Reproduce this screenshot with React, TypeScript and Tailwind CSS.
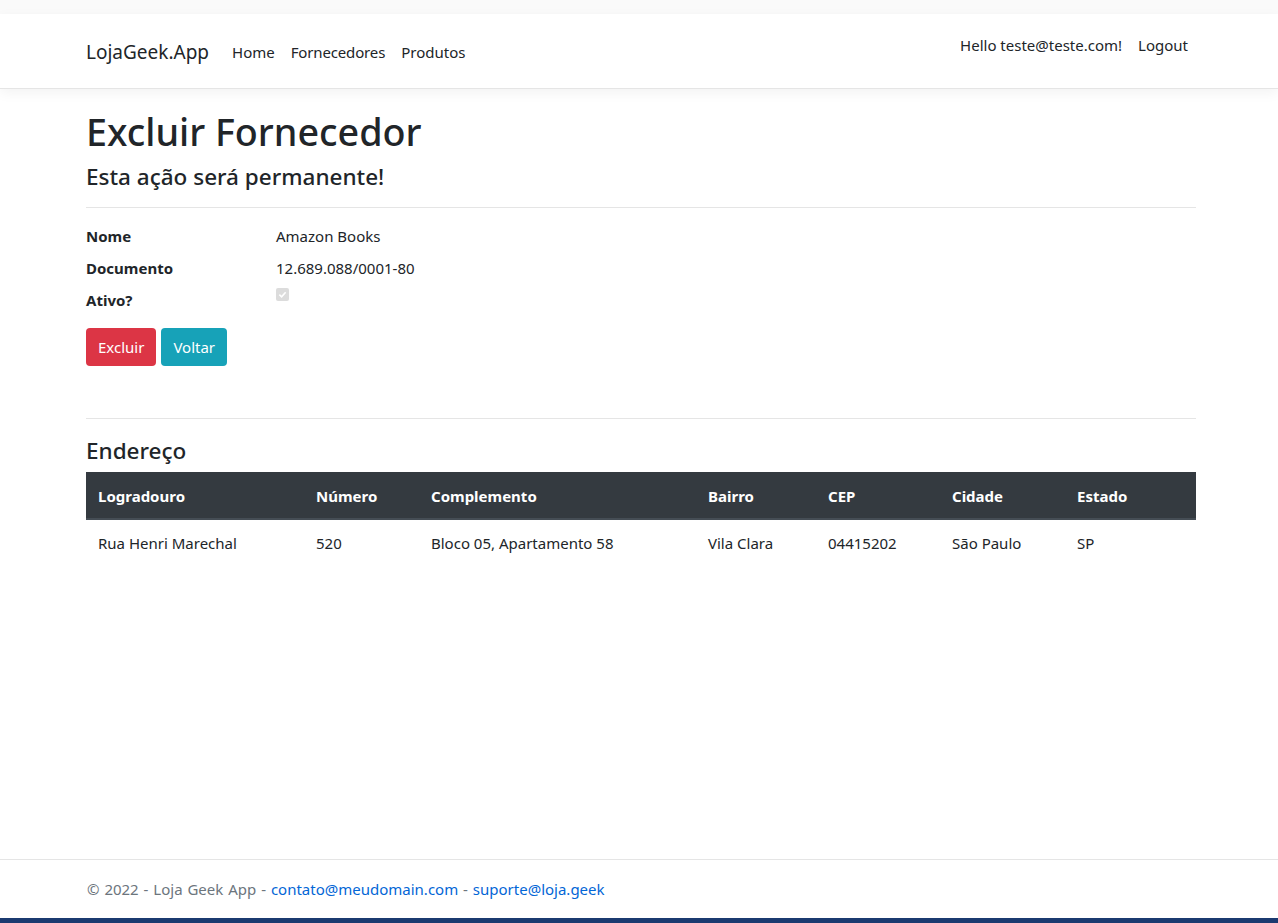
import React from "react";

export default function App() {
  const font = { fontFamily: '"Noto Sans", "Open Sans", sans-serif' };
  return (
    <div className="min-h-[923px] flex flex-col bg-white text-[#212529]" style={font}>
      <div className="h-[14px] bg-[#fafafa]" />
      <nav className="h-[75px] bg-white border-b border-[#e5e5e5] shadow-[0_4px_12px_rgba(0,0,0,0.05)]">
        <div className="ml-[86px] w-[1110px] flex justify-between">
          <div className="flex items-center pt-[27px]">
            <span className="text-[19px] leading-[20px] text-[#212529] mr-[15px]">LojaGeek.App</span>
            <a className="px-[8px] text-[15px] text-[#212529]">Home</a>
            <a className="px-[8px] text-[15px] text-[#212529] tracking-[-0.15px]">Fornecedores</a>
            <a className="px-[8px] text-[15px] text-[#212529]">Produtos</a>
          </div>
          <div className="flex items-center pt-[13px] pr-[8px]">
            <span className="text-[15px] text-[#212529] px-[8px]">Hello teste@teste.com!</span>
            <a className="text-[15px] text-[#212529] pl-[8px]">Logout</a>
          </div>
        </div>
      </nav>
      <main className="ml-[86px] w-[1110px] flex-1">
        <h1 className="text-[37.7px] font-medium leading-[48px] pt-[19px]">Excluir Fornecedor</h1>
        <h4 className="text-[22.5px] font-medium leading-[28px] mt-[7px]">Esta ação será permanente!</h4>
        <hr className="border-[#e5e5e5] mt-[16px] mb-[16px]" />
        <dl className="grid grid-cols-[190px_1fr] text-[15px] leading-[24px]">
          <dt className="font-bold mb-[8px]">Nome</dt>
          <dd className="mb-[8px]">Amazon Books</dd>
          <dt className="font-bold mb-[8px]">Documento</dt>
          <dd className="mb-[8px]">12.689.088/0001-80</dd>
          <dt className="font-bold mb-[16px]">Ativo?</dt>
          <dd className="mb-[16px]">
            <span className="inline-flex w-[13px] h-[13px] rounded-[2px] bg-[#dcdcdc] items-center justify-center align-top">
              <svg width="9" height="9" viewBox="0 0 10 10">
                <path d="M1.5 5.2 L4 7.5 L8.5 2.5" fill="none" stroke="#ffffff" strokeWidth="1.8" />
              </svg>
            </span>
          </dd>
        </dl>
        <div className="flex gap-[5px]">
          <button className="h-[38px] px-[12px] rounded-[4px] bg-[#dc3545] text-white text-[15px]">Excluir</button>
          <button className="h-[38px] px-[12px] rounded-[4px] bg-[#17a2b8] text-white text-[15px]">Voltar</button>
        </div>
        <hr className="border-[#e5e5e5] mt-[52px]" />
        <h4 className="text-[22.5px] font-medium leading-[28px] mt-[18px] mb-[7px]">Endereço</h4>
        <table className="w-full text-[15px] border-collapse">
          <thead>
            <tr className="bg-[#343a40] text-white h-[47px] border-b-2 border-[#454d55]">
              <th className="w-[218px] text-left font-bold px-[12px] pt-[2px]">Logradouro</th>
              <th className="w-[115px] text-left font-bold px-[12px] pt-[2px]">Número</th>
              <th className="w-[277px] text-left font-bold px-[12px] pt-[2px]">Complemento</th>
              <th className="w-[120px] text-left font-bold px-[12px] pt-[2px]">Bairro</th>
              <th className="w-[124px] text-left font-bold px-[12px] pt-[2px]">CEP</th>
              <th className="w-[125px] text-left font-bold px-[12px] pt-[2px]">Cidade</th>
              <th className="text-left font-bold px-[12px] pt-[2px]">Estado</th>
            </tr>
          </thead>
          <tbody>
            <tr className="h-[48px]">
              <td className="px-[12px]">Rua Henri Marechal</td>
              <td className="px-[12px]">520</td>
              <td className="px-[12px]">Bloco 05, Apartamento 58</td>
              <td className="px-[12px]">Vila Clara</td>
              <td className="px-[12px]">04415202</td>
              <td className="px-[12px]">São Paulo</td>
              <td className="px-[12px]">SP</td>
            </tr>
          </tbody>
        </table>
      </main>
      <footer className="border-t border-[#e5e5e5] h-[59px] flex items-center">
        <div className="ml-[87px] text-[15px] text-[#6c757d] [word-spacing:1px]">
          © 2022 - Loja Geek App - <a className="text-[#0366d6] [word-spacing:0px]">contato@meudomain.com</a> - <a className="text-[#0366d6] [word-spacing:0px]">suporte@loja.geek</a>
        </div>
      </footer>
      <div className="h-[5px] bg-[#1b3a70]" />
    </div>
  );
}
